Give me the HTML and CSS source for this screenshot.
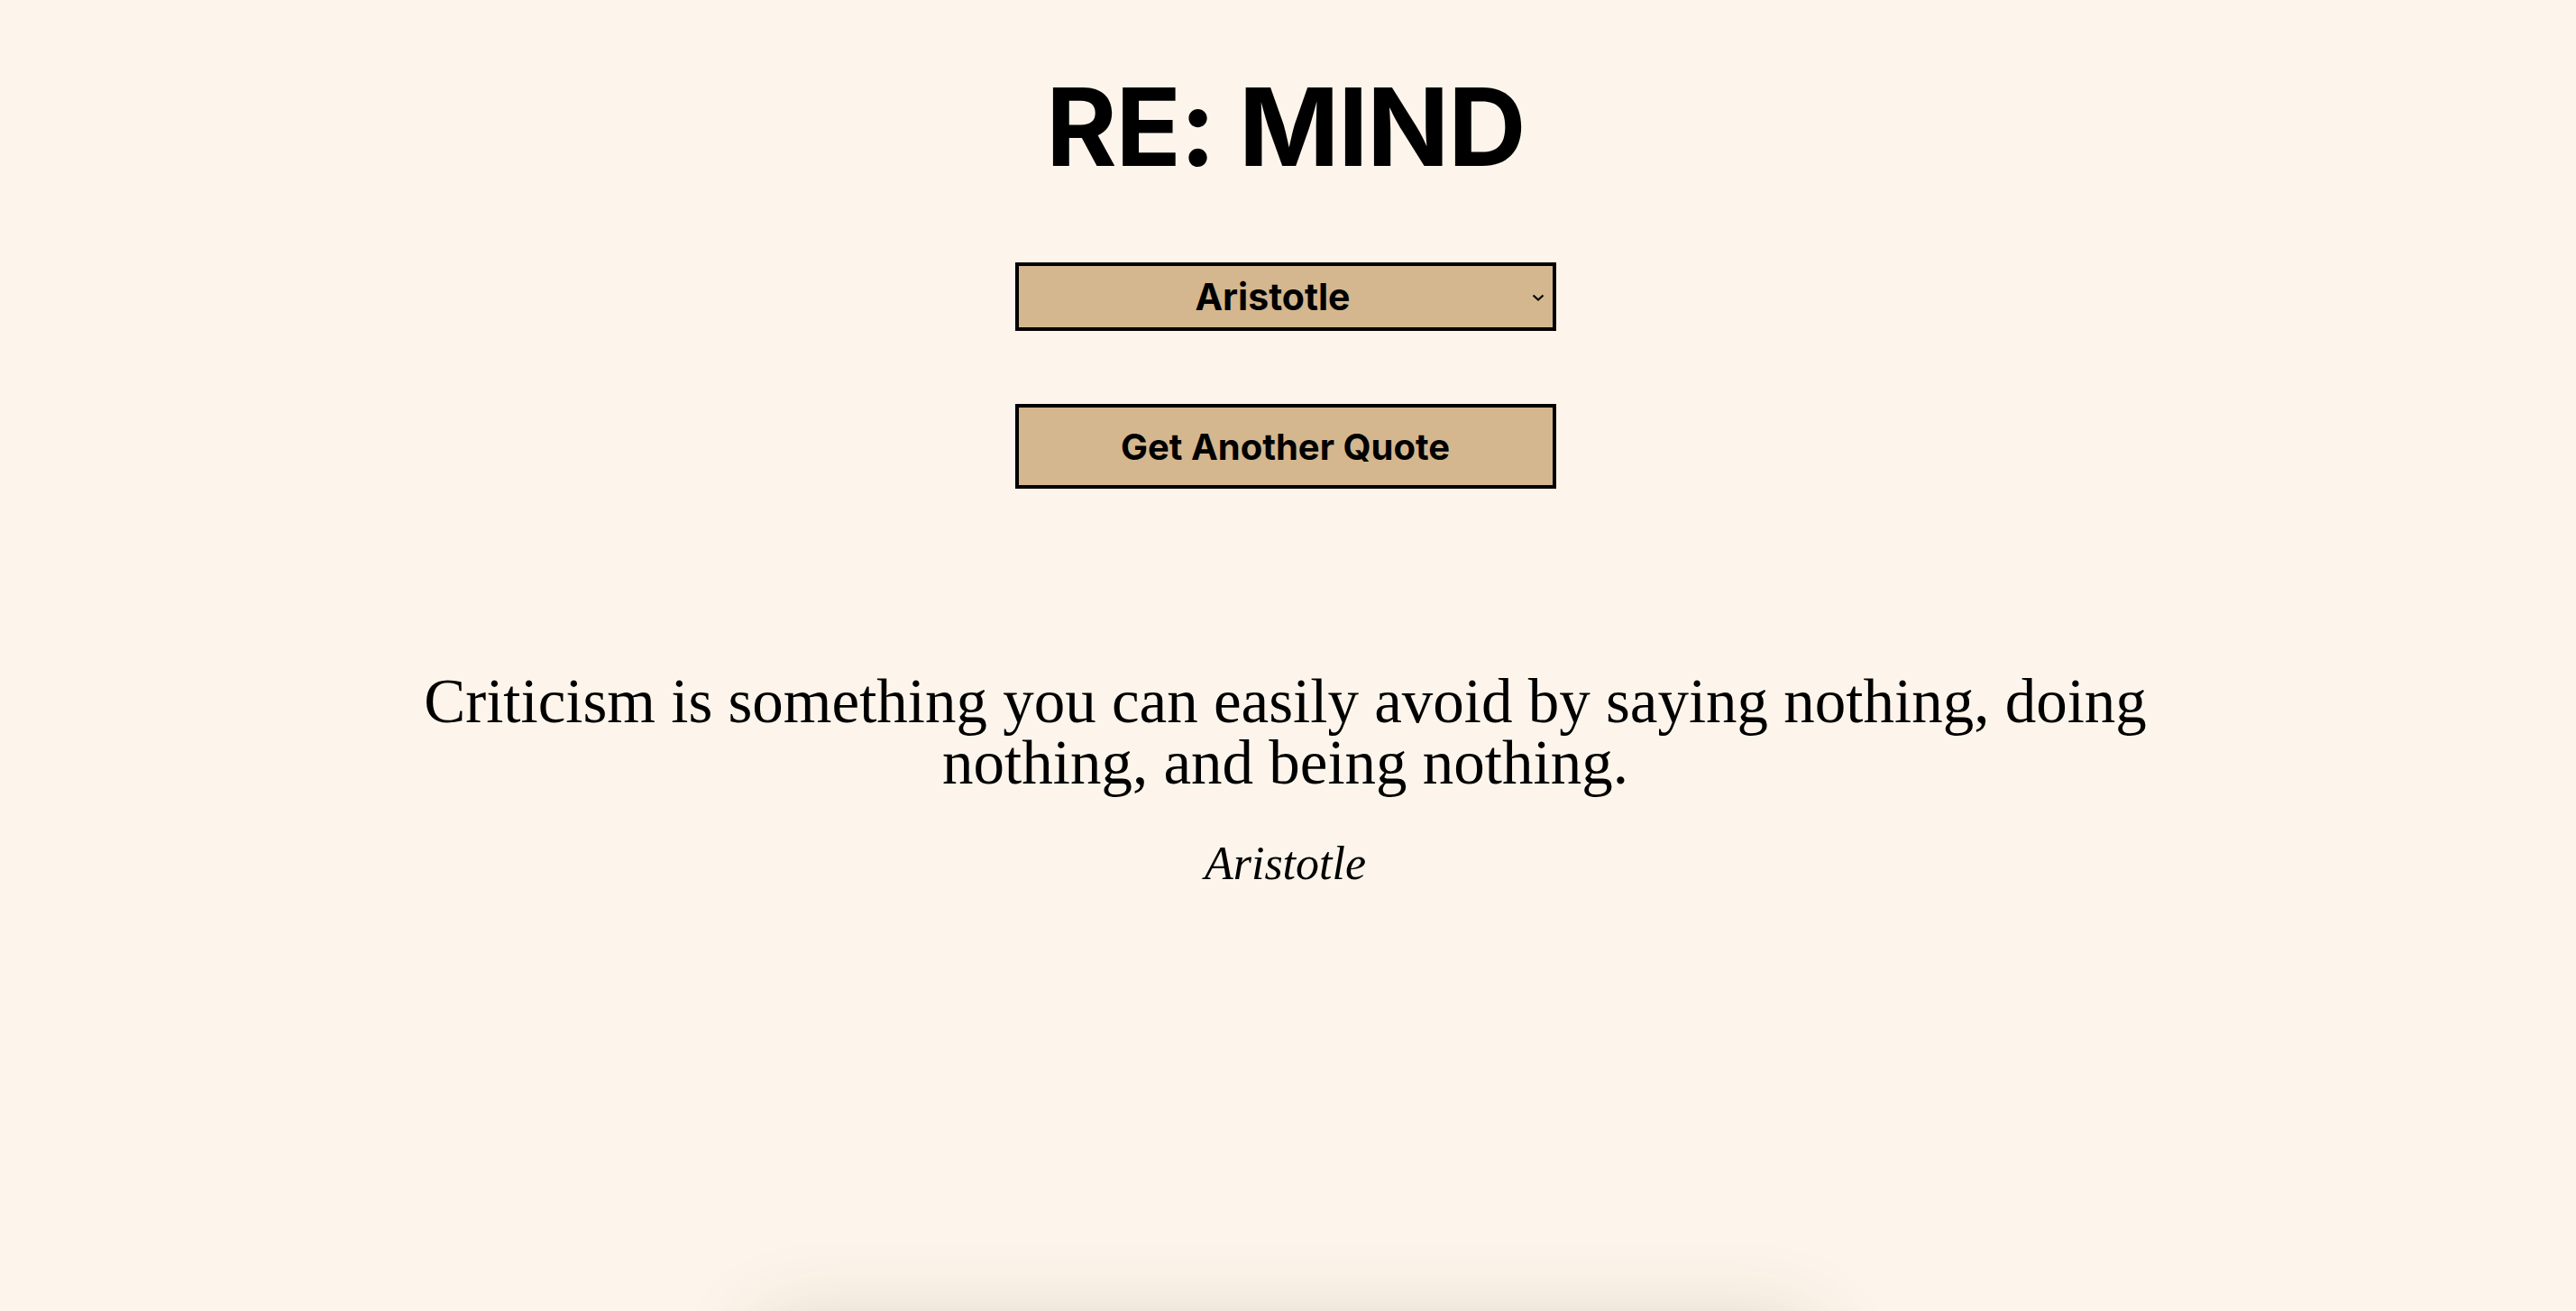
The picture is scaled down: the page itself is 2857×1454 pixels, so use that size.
FILE: index.html
```html
<!DOCTYPE html>
<html lang="en">
<head>
<meta charset="utf-8">
<title>RE: MIND</title>
<link rel="stylesheet" href="styles.css">
</head>
<body>
<main class="page">
  <h1 class="title">RE: MIND</h1>
  <div class="select-wrap">
    <select class="picker">
      <option>Aristotle</option>
    </select>
    <svg class="chev" viewBox="0 0 14 8" width="14" height="8" aria-hidden="true"><path d="M1.5 1.5 L7 6.5 L12.5 1.5" fill="none" stroke="#000" stroke-width="2.2"/></svg>
  </div>
  <button class="btn">Get Another Quote</button>
  <section class="quote">
    <p class="quote-text">Criticism is something you can easily avoid by saying nothing, doing nothing, and being nothing.</p>
    <p class="quote-author">Aristotle</p>
  </section>
  <div class="card"></div>
</main>
</body>
</html>
```

FILE: styles.css
```css
html, body {
  margin: 0;
  padding: 0;
  background: #fdf5eb;
  overflow: hidden;
}
.page {
  display: flex;
  flex-direction: column;
  align-items: center;
  padding-right: 6px;
  font-family: "Inter", "Liberation Sans", sans-serif;
  color: #000;
}
.title {
  margin: 81px 0 0;
  font-size: 120px;
  line-height: 120px;
  font-weight: 700;
  letter-spacing: -1.6px;
}
.select-wrap {
  position: relative;
  margin-top: 90px;
  width: 600px;
  height: 76px;
}
.picker {
  appearance: none;
  -webkit-appearance: none;
  box-sizing: border-box;
  width: 100%;
  height: 100%;
  background: #d4b78f;
  border: 4px solid #000;
  border-radius: 0;
  font-family: "Inter", "Liberation Sans", sans-serif;
  font-weight: 700;
  font-size: 41px;
  text-align: center;
  text-align-last: center;
  color: #000;
  padding: 0 28px 0 0;
}
.chev {
  position: absolute;
  right: 13px;
  top: 35px;
  width: 14px;
  height: 8px;
}
.btn {
  box-sizing: border-box;
  margin-top: 81px;
  width: 600px;
  height: 94px;
  background: #d4b78f;
  border: 4px solid #000;
  border-radius: 0;
  font-family: "Inter", "Liberation Sans", sans-serif;
  font-weight: 700;
  font-size: 40px;
  color: #000;
}
.quote {
  margin-top: 202px;
  width: 2000px;
  text-align: center;
}
.quote-text {
  margin: 0;
  font-family: "Liberation Serif", serif;
  font-size: 69px;
  line-height: 68px;
}
.quote-author {
  margin: 48px 0 0;
  font-family: "Liberation Serif", serif;
  font-style: italic;
  font-size: 52px;
  line-height: 60px;
}
.card {
  margin-top: 505px;
  width: 1120px;
  height: 300px;
  background: #fdf5eb;
  box-shadow: 0 0 90px 20px rgba(60, 50, 30, 0.2);
}
```
